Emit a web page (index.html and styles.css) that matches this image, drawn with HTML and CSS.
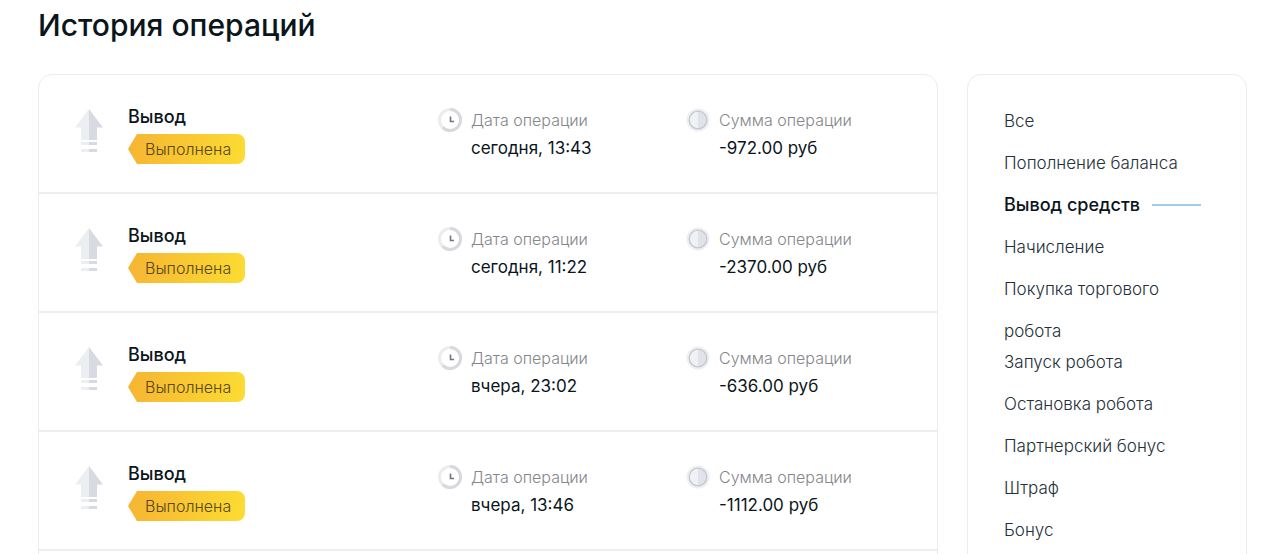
FILE: index.html
```html
<!DOCTYPE html>
<html lang="ru">
<head>
    <meta charset="UTF-8">
    <meta name="viewport" content="width=device-width, initial-scale=1.0">
    <title>История операций</title>
    <link rel="stylesheet" href="styles.css">
</head>
<body>
    <!-- Shared icons -->
    <svg class="sprite" aria-hidden="true">
        <symbol id="icon-out" viewBox="0 0 28 44">
            <path fill="#eceef1" d="M14 0v31H6V18.500H0z"/>
            <path fill="#d7dae0" d="M14 0v31h8V18.500h6z"/>
            <path fill="#eceef1" d="M6 33h8v3H6zM6 40h8v3H6z"/>
            <path fill="#d7dae0" d="M14 33h8v3h-8zM14 40h8v3h-8z"/>
        </symbol>
        <symbol id="icon-clock" viewBox="0 0 24 24">
            <circle cx="12" cy="12" r="10.500" fill="#fff" stroke="#ececef" stroke-width="3"/>
            <path d="M12 1.500a10.500 10.500 0 1 1-7.400 17.900" fill="none" stroke="#d8d9de" stroke-width="3"/>
            <path d="M12.500 8.500v5h3.500" fill="none" stroke="#74757c" stroke-width="1.600"/>
        </symbol>
        <symbol id="icon-coin" viewBox="0 0 24 24">
            <circle cx="12" cy="12" r="11.500" fill="#eeeff4"/>
            <path d="M12 3a9 9 0 0 0 0 18z" fill="#f0f1f4"/>
            <path d="M12 3a9 9 0 0 1 0 18z" fill="#e0e3ea"/>
            <circle cx="12" cy="12" r="8.800" fill="none" stroke="#c5c7cd" stroke-width="1.300"/>
        </symbol>
    </svg>

    <main class="page">
        <h1 class="title">История операций</h1>
        <div class="layout">
            <section class="panel history">
                <article class="operation">
                    <svg class="operation-icon" aria-hidden="true"><use href="#icon-out"/></svg>
                    <div class="operation-type">
                        <h2 class="operation-name">Вывод</h2>
                        <span class="status">Выполнена</span>
                    </div>
                    <div class="info">
                        <svg class="info-icon" aria-hidden="true"><use href="#icon-clock"/></svg>
                        <div>
                            <div class="info-label">Дата операции</div>
                            <div class="info-value">сегодня, 13:43</div>
                        </div>
                    </div>
                    <div class="info">
                        <svg class="info-icon" aria-hidden="true"><use href="#icon-coin"/></svg>
                        <div>
                            <div class="info-label">Сумма операции</div>
                            <div class="info-value">-972.00 руб</div>
                        </div>
                    </div>
                </article>
                <article class="operation">
                    <svg class="operation-icon" aria-hidden="true"><use href="#icon-out"/></svg>
                    <div class="operation-type">
                        <h2 class="operation-name">Вывод</h2>
                        <span class="status">Выполнена</span>
                    </div>
                    <div class="info">
                        <svg class="info-icon" aria-hidden="true"><use href="#icon-clock"/></svg>
                        <div>
                            <div class="info-label">Дата операции</div>
                            <div class="info-value">сегодня, 11:22</div>
                        </div>
                    </div>
                    <div class="info">
                        <svg class="info-icon" aria-hidden="true"><use href="#icon-coin"/></svg>
                        <div>
                            <div class="info-label">Сумма операции</div>
                            <div class="info-value">-2370.00 руб</div>
                        </div>
                    </div>
                </article>
                <article class="operation">
                    <svg class="operation-icon" aria-hidden="true"><use href="#icon-out"/></svg>
                    <div class="operation-type">
                        <h2 class="operation-name">Вывод</h2>
                        <span class="status">Выполнена</span>
                    </div>
                    <div class="info">
                        <svg class="info-icon" aria-hidden="true"><use href="#icon-clock"/></svg>
                        <div>
                            <div class="info-label">Дата операции</div>
                            <div class="info-value">вчера, 23:02</div>
                        </div>
                    </div>
                    <div class="info">
                        <svg class="info-icon" aria-hidden="true"><use href="#icon-coin"/></svg>
                        <div>
                            <div class="info-label">Сумма операции</div>
                            <div class="info-value">-636.00 руб</div>
                        </div>
                    </div>
                </article>
                <article class="operation">
                    <svg class="operation-icon" aria-hidden="true"><use href="#icon-out"/></svg>
                    <div class="operation-type">
                        <h2 class="operation-name">Вывод</h2>
                        <span class="status">Выполнена</span>
                    </div>
                    <div class="info">
                        <svg class="info-icon" aria-hidden="true"><use href="#icon-clock"/></svg>
                        <div>
                            <div class="info-label">Дата операции</div>
                            <div class="info-value">вчера, 13:46</div>
                        </div>
                    </div>
                    <div class="info">
                        <svg class="info-icon" aria-hidden="true"><use href="#icon-coin"/></svg>
                        <div>
                            <div class="info-label">Сумма операции</div>
                            <div class="info-value">-1112.00 руб</div>
                        </div>
                    </div>
                </article>
            </section>

            <nav class="panel filter">
                <a class="filter-link" href="#all">Все</a>
                <a class="filter-link" href="#deposit">Пополнение баланса</a>
                <a class="filter-link active" href="#withdraw">Вывод средств</a>
                <a class="filter-link" href="#accrual">Начисление</a>
                <a class="filter-link long" href="#robot-buy">Покупка торгового робота</a>
                <a class="filter-link" href="#robot-start">Запуск робота</a>
                <a class="filter-link" href="#robot-stop">Остановка робота</a>
                <a class="filter-link" href="#partner">Партнерский бонус</a>
                <a class="filter-link" href="#fine">Штраф</a>
                <a class="filter-link" href="#bonus">Бонус</a>
            </nav>
        </div>
    </main>
</body>
</html>
```
FILE: styles.css
```css
* {
    box-sizing: border-box;
}
body {
    margin: 0;
    font-family: Inter, "Open Sans", sans-serif;
    font-size: 16px;
    color: #0b151c;
    background-color: #fff;
}
.sprite {
    display: none;
}
.page {
    padding: 4px 33px 0 38px;
}
.title {
    margin: 0 0 28px;
    font-size: 30px;
    line-height: 42px;
    font-weight: 500;
}
.layout {
    display: grid;
    grid-template-columns: minmax(0, 1fr) 280px;
    gap: 29px;
}
.panel {
    border: 1px solid #ececee;
    border-radius: 14px;
    padding-bottom: 30px;
}

/* Operations list */
.operation {
    display: grid;
    grid-template-columns: 28px 285px 223px 1fr;
    column-gap: 25px;
    align-items: start;
    padding: 30px 36px 28px;
    border-bottom: 2px solid #eeeef0;
}
.operation-icon {
    width: 28px;
    height: 44px;
    margin-top: 4px;
}
.operation-name {
    margin: 0 0 5px;
    font-size: 18px;
    line-height: 24px;
    font-weight: 500;
}
/* Yellow tag with a pointed left side */
.status {
    display: inline-block;
    padding: 0 14px 0 17px;
    border-radius: 8px;
    font-size: 16px;
    line-height: 30px;
    font-weight: 300;
    color: #594816;
    background: linear-gradient(100deg, #f6b433, #fcdc33);
    clip-path: polygon(0 50%, 9px 0, 100% 0, 100% 100%, 9px 100%);
    vertical-align: top;
}
.info {
    display: flex;
    gap: 9px;
    padding-top: 3px;
}
.info-icon {
    flex: none;
    width: 24px;
    height: 24px;
}
.info-label {
    font-size: 16px;
    line-height: 24px;
    font-weight: 300;
    color: #85868b;
}
.info-value {
    margin-top: 2px;
    font-size: 17px;
    line-height: 28px;
}

/* Filter by type */
.filter {
    display: flex;
    flex-direction: column;
    padding: 25px 36px 30px;
}
.filter-link {
    font-size: 17px;
    line-height: 42px;
    font-weight: 300;
    color: #25303a;
    text-decoration: none;
}
.filter-link.long {
    margin-bottom: -11px;
}
.filter-link.active {
    display: flex;
    align-items: center;
    gap: 12px;
    font-size: 18px;
    font-weight: 500;
    color: #0b151c;
}
.filter-link.active::after {
    content: "";
    width: 49px;
    height: 2px;
    background-color: #9fcfe8;
}
```
